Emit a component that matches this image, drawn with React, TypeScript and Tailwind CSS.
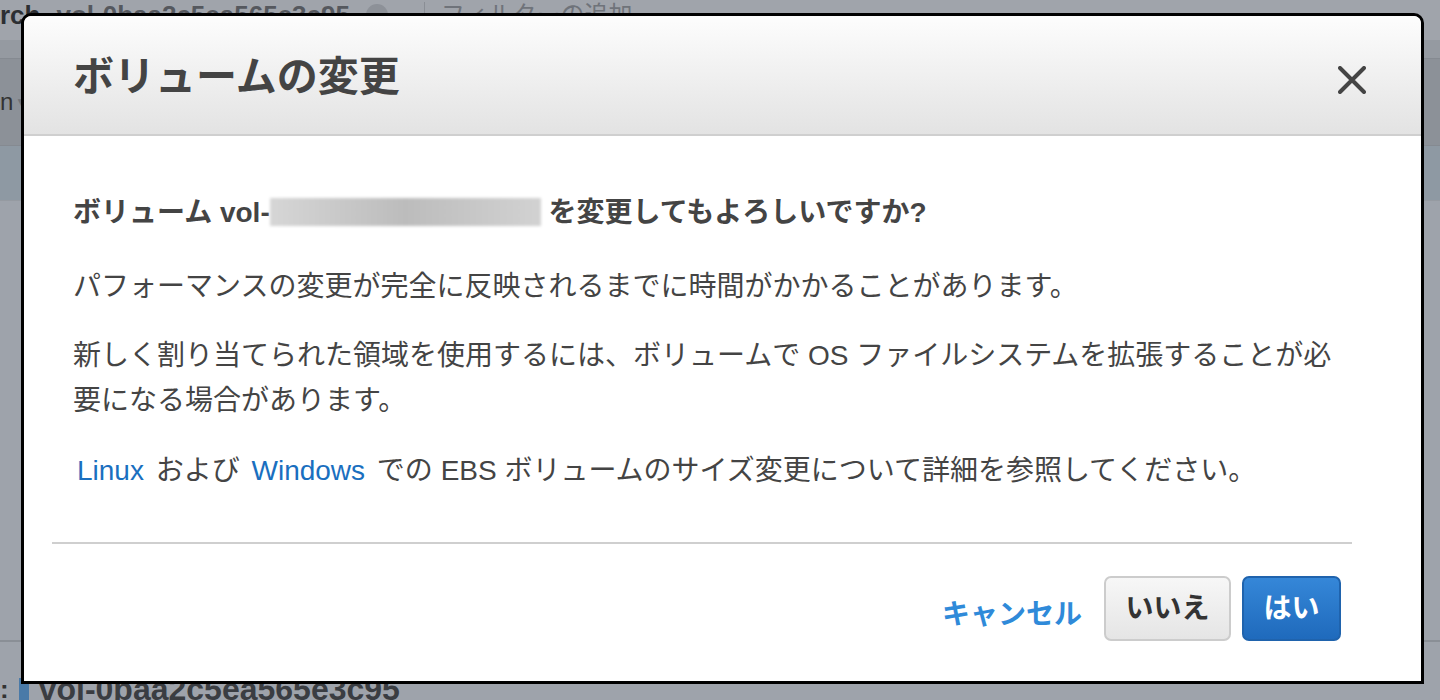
import React from "react";

const font = "font-['Liberation_Sans','Noto_Sans_CJK_JP',sans-serif]";

function CloseIcon() {
  return (
    <svg width="28" height="28" viewBox="0 0 28 28" fill="none">
      <path d="M2 2 L26 26 M26 2 L2 26" stroke="#444" strokeWidth="4" strokeLinecap="round" />
    </svg>
  );
}

function BackgroundPage() {
  return (
    <div className="flex h-[700px] flex-col overflow-hidden bg-[#9ea3ab]">
      <div className="flex h-[40px] items-start gap-4 bg-[#a0a4ab] pt-[2px]">
        <span className="text-[26px] font-bold leading-[26px] text-[#2d2f33]">rch</span>
        <span className="text-[26px] font-bold leading-[26px] text-[#55585e]">vol-0baa2c5ea565e3c95</span>
        <span className="mt-[2px] h-[22px] w-[22px] rounded-full bg-[#8d9198]" />
        <span className="ml-[20px] h-[40px] border-l border-[#8a8e95]" />
        <span className="text-[24px] leading-[26px] text-[#6f737a]">フィルターの追加</span>
      </div>
      <div className="h-[19px] border-b border-[#858a91] bg-[#959aa1]" />
      <div className="flex h-[86px] items-center bg-[#8c9198]">
        <span className="text-[24px] text-[#333]">n</span>
        <span className="ml-[2px] text-[12px] text-[#6d7178]">▼</span>
      </div>
      <div className="h-[55px] border-t border-[#858a91] bg-[#8e99a3]" />
      <div className="flex-1 border-t border-[#959aa1]" />
      <div className="h-[60px] border-t-2 border-[#8a8f96] pt-[36px]">
        <div className="flex items-center gap-[10px]">
          <span className="text-[26px] font-bold leading-[22px] text-[#333]">:</span>
          <span className="h-[22px] w-[10px] bg-[#4a7aa8]" />
          <span className="text-[32px] font-bold leading-[22px] text-[#3a3d42]">vol-0baa2c5ea565e3c95</span>
        </div>
      </div>
    </div>
  );
}

function Dialog() {
  return (
    <div className="ml-[21px] mt-[13px] flex h-[671px] w-[1403px] flex-col rounded-t-[10px] border-[3px] border-black bg-white">
      <div className="flex h-[120px] items-center justify-between rounded-t-[8px] border-b-2 border-[#cfcfcf] bg-gradient-to-b from-[#fdfdfd] to-[#e3e3e3] pl-[49px] pr-[55px] pt-[6px]">
        <h1 className="text-[41px] font-bold text-[#444]">ボリュームの変更</h1>
        <button className="mt-[4px]">
          <CloseIcon />
        </button>
      </div>

      <div className="flex flex-col pl-[49px] pr-[69px] pt-[54px] text-[28px] leading-[45px] text-[#444]">
        <p className="mb-[29px] font-bold">
          ボリューム vol-
          <span className="inline-block h-[28px] w-[271px] translate-y-[4px] bg-gradient-to-r from-[#d6d6d6] via-[#bcbcbc] to-[#d2d2d2] blur-[1.5px]" />
          {" "}を変更してもよろしいですか?
        </p>
        <p className="mb-[24px]">
          パフォーマンスの変更が完全に反映されるまでに時間がかかることがあります。
        </p>
        <p className="mb-[25px]">
          新しく割り当てられた領域を使用するには、ボリュームで OS ファイルシステムを拡張することが必要になる場合があります。
        </p>
        <p>
          <a className="px-[4px] text-[#1a6fbf]">Linux</a> および <a className="px-[4px] text-[#1a6fbf]">Windows</a> での EBS ボリュームのサイズ変更について詳細を参照してください。
        </p>
      </div>

      <div className="ml-[28px] mt-[49px] h-[2px] w-[1300px] bg-[#cfcfcf]" />

      <div className="flex items-center justify-end gap-[11px] pr-[80px] pt-[32px]">
        <a className="mr-[11px] mt-[12px] text-[28px] font-bold text-[#2f8ad9]">キャンセル</a>
        <button className="h-[65px] w-[127px] rounded-[7px] border-2 border-[#cccccc] bg-gradient-to-b from-[#f7f7f7] to-[#e5e5e5] text-[28px] font-bold text-[#333]">
          いいえ
        </button>
        <button className="h-[65px] w-[99px] rounded-[7px] border-2 border-[#1f63ad] bg-gradient-to-b from-[#3587d8] to-[#1f6abc] text-[28px] font-bold text-white">
          はい
        </button>
      </div>
    </div>
  );
}

export default function App() {
  return (
    <div className={`relative h-[700px] w-[1440px] overflow-hidden ${font}`}>
      <BackgroundPage />
      <div className="absolute inset-0">
        <Dialog />
      </div>
    </div>
  );
}
